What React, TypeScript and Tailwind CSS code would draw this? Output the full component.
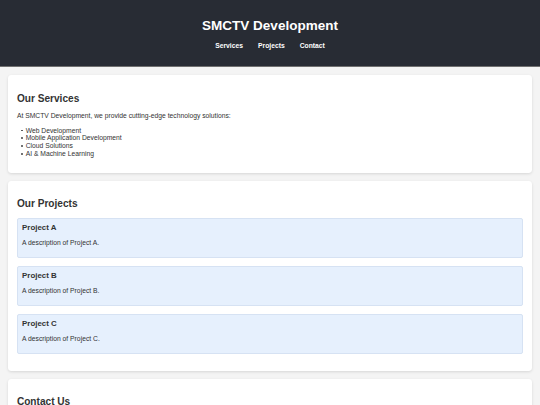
import React from "react";

const projects = [
  { name: "Project A", desc: "A description of Project A." },
  { name: "Project B", desc: "A description of Project B." },
  { name: "Project C", desc: "A description of Project C." },
];

const services = [
  "Web Development",
  "Mobile Application Development",
  "Cloud Solutions",
  "AI & Machine Learning",
];

export default function App() {
  return (
    <div className="min-h-screen bg-[#f4f4f4] font-['Liberation_Sans',Arial,sans-serif] text-[#333] text-[6.75px] leading-[7.76px]">
      <header className="bg-[#282c34] text-white text-center pt-[17.6px] pb-[15.8px] border-b-[1.3px] border-[#707070]">
        <h1 className="text-[13.5px] font-bold leading-[15.5px] mb-[9px]">SMCTV Development</h1>
        <nav>
          <ul className="flex justify-center gap-[15px]">
            <li><a className="font-bold text-white leading-[7.76px]">Services</a></li>
            <li><a className="font-bold text-white leading-[7.76px]">Projects</a></li>
            <li><a className="font-bold text-white leading-[7.76px]">Contact</a></li>
          </ul>
        </nav>
      </header>
      <main className="flex flex-col gap-[8.44px] p-[8.44px]">
        <section className="bg-white rounded-[3.4px] shadow-[0_1px_3px_rgba(0,0,0,0.12)] p-[8.44px]">
          <h2 className="text-[10.125px] font-bold leading-[11.63px] mt-[9px] mb-[8px] text-[#333]">Our Services</h2>
          <p className="mb-[6.75px]">At SMCTV Development, we provide cutting-edge technology solutions:</p>
          <ul className="pl-[3.6px] mb-[6.75px]">
            {services.map((s) => (
              <li key={s} className="flex items-center">
                <span className="w-[5.2px] flex-none flex items-center">
                  <span className="block w-[1.8px] h-[1.8px] rounded-full bg-[#444] ml-[0.3px]" />
                </span>
                <span>{s}</span>
              </li>
            ))}
          </ul>
        </section>
        <section className="bg-white rounded-[3.4px] shadow-[0_1px_3px_rgba(0,0,0,0.12)] p-[8.44px]">
          <h2 className="text-[10.125px] font-bold leading-[11.63px] mt-[8.4px] mb-[8.4px]">Our Projects</h2>
          {projects.map((p) => (
            <div
              key={p.name}
              className="bg-[#e6f0fd] border border-[#d6e2f3] rounded-[2px] px-[4.22px] pt-[4px] pb-[4.1px] mb-[8.44px]"
            >
              <h3 className="text-[7.9px] font-bold leading-[9.1px] mb-[6.4px]">{p.name}</h3>
              <p className="mb-[6.3px]">{p.desc}</p>
            </div>
          ))}
        </section>
        <section className="bg-white rounded-[3.4px] shadow-[0_1px_3px_rgba(0,0,0,0.12)] p-[8.44px]">
          <h2 className="text-[10.125px] font-bold leading-[11.63px] mt-[8.4px] mb-[8.4px]">Contact Us</h2>
          <p className="mb-[6.75px]">Email: info@smctv.dev</p>
        </section>
      </main>
    </div>
  );
}
